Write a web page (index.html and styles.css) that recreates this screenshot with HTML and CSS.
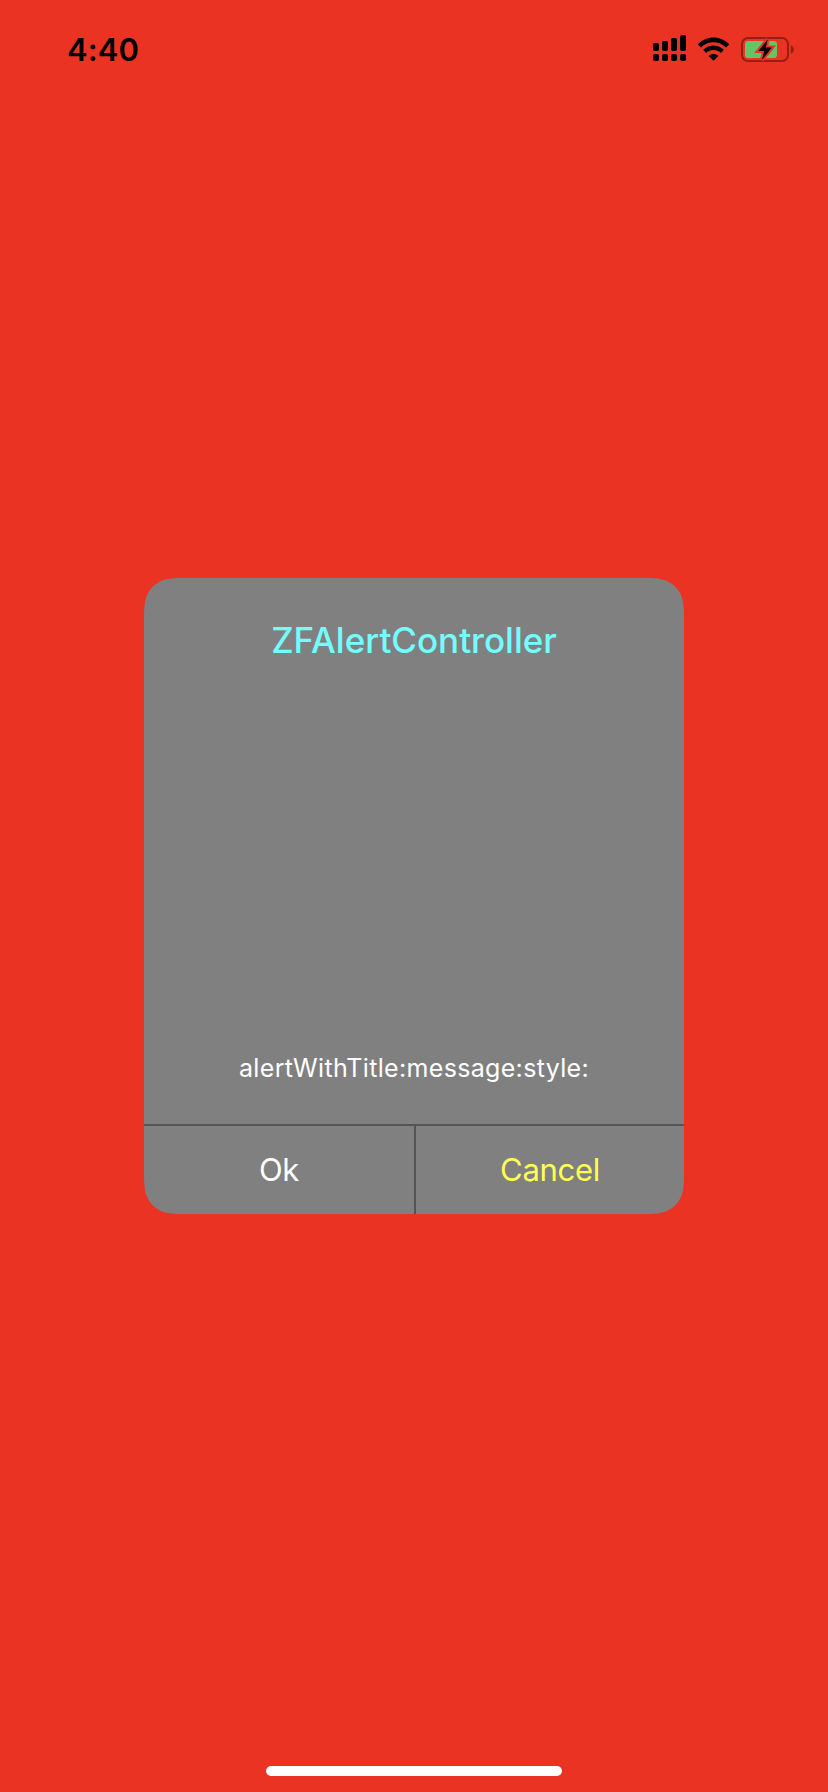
FILE: index.html
```html
<!DOCTYPE html>
<html lang="en">
<head>
<meta charset="utf-8">
<title>ZFAlertController</title>
<link rel="stylesheet" href="styles.css">
</head>
<body>
<div class="screen">
  <header class="status-bar">
    <span class="clock">4:40</span>
    <svg class="status-icons" width="150" height="34" viewBox="650 32 150 34" aria-hidden="true">
      <g fill="#000">
        <rect x="653" y="43" width="6" height="8" rx="1.8"/>
        <rect x="662" y="41" width="6" height="10" rx="1.8"/>
        <rect x="671" y="38" width="6" height="13" rx="1.8"/>
        <rect x="680" y="35" width="6" height="16" rx="1.8"/>
        <rect x="653" y="54" width="6" height="7" rx="1.8"/>
        <rect x="662" y="54" width="6" height="7" rx="1.8"/>
        <rect x="671" y="54" width="6" height="7" rx="1.8"/>
        <rect x="680" y="54" width="6" height="7" rx="1.8"/>
        <path d="M697.8 44.2C706.6 35.1 720.4 35.1 729.2 44.2L726.1 47.4C719 40.4 708 40.4 700.9 47.4Z"/>
        <path d="M703.1 49.7C709 44 718 44 723.9 49.7L720.8 52.9C716.6 49.1 710.4 49.1 706.2 52.9Z"/>
        <path d="M708.6 55.9C711.4 53.4 715.6 53.4 718.4 55.9L713.5 60.8Z"/>
      </g>
      <rect x="742" y="38" width="46" height="23" rx="6" fill="none" stroke="#961f15" stroke-width="2"/>
      <path d="M790.8 45.3C794.8 46.6 794.8 52.6 790.8 53.8Z" fill="#961f15"/>
      <rect x="745" y="41" width="32" height="17" rx="3" fill="#65c466"/>
      <path d="M767.8 39.2L758.4 51.1H764.2L761.9 60L771.9 47.6H765.8Z" fill="#000" stroke="#ea3323" stroke-width="4" paint-order="stroke"/>
    </svg>
  </header>
  <main class="stage">
    <section class="alert">
      <div class="alert-body">
        <h1 class="alert-title">ZFAlertController</h1>
        <p class="alert-message">alertWithTitle:message:style:</p>
      </div>
      <div class="alert-actions">
        <button class="action action-ok">Ok</button>
        <button class="action action-cancel">Cancel</button>
      </div>
    </section>
  </main>
  <footer class="home-area"><div class="home-indicator"></div></footer>
</div>
</body>
</html>
```
FILE: styles.css
```css
* { box-sizing: border-box; }

body {
  margin: 0;
  background: #ea3323;
  font-family: Inter, "Liberation Sans", sans-serif;
}

.screen {
  display: flex;
  flex-direction: column;
  width: 828px;
  height: 1792px;
}

.status-bar {
  display: flex;
  justify-content: space-between;
  align-items: flex-start;
  height: 88px;
  padding: 32px 28px 0 67px;
}

.clock {
  font-size: 31px;
  line-height: 36px;
  font-weight: 600;
  letter-spacing: 0.1px;
}

.status-icons { display: block; }

.stage {
  display: flex;
  flex: 1;
  justify-content: center;
  padding-top: 490px;
}

.alert {
  display: flex;
  flex-direction: column;
  width: 540px;
  height: 636px;
  background: #808080;
  /* Continuous-curvature corners, radius 30 */
  clip-path: path("M45.86 0H494.14C507.35 0 513.95 0 521.06 2.25C528.82 5.07 534.93 11.18 537.75 18.94C540 26.05 540 32.65 540 45.86V590.14C540 603.35 540 609.95 537.75 617.06C534.93 624.82 528.82 630.93 521.06 633.75C513.95 636 507.35 636 494.14 636H45.86C32.65 636 26.05 636 18.94 633.75C11.18 630.93 5.07 624.82 2.25 617.06C0 609.95 0 603.35 0 590.14V45.86C0 32.65 0 26.05 2.25 18.94C5.07 11.18 11.18 5.07 18.94 2.25C26.05 0 32.65 0 45.86 0Z");
}

.alert-body {
  display: flex;
  flex: 1;
  flex-direction: column;
  justify-content: space-between;
  padding: 40px 0;
  text-align: center;
}

.alert-title {
  margin: 0;
  color: #73fdff;
  font-size: 35px;
  line-height: 44px;
  font-weight: 500;
  letter-spacing: 0;
}

.alert-message {
  margin: 0;
  color: #fff;
  font-size: 25px;
  line-height: 32px;
  letter-spacing: 0.33px;
}

.alert-actions {
  display: grid;
  grid-template-columns: 270px 270px;
  height: 90px;
  border-top: 2px solid #555;
}

.action {
  margin: 0;
  padding: 0;
  border: 0;
  background: none;
  font: 400 31px/40px Inter, "Liberation Sans", sans-serif;
  letter-spacing: -0.3px;
}

.action-ok { color: #fff; }

.action-cancel {
  border-left: 2px solid #555;
  color: #ffff54;
}

.home-area {
  display: flex;
  justify-content: center;
  align-items: flex-end;
  height: 68px;
  padding-bottom: 16px;
}

.home-indicator {
  width: 296px;
  height: 10px;
  border-radius: 5px;
  background: #fff;
}
```
